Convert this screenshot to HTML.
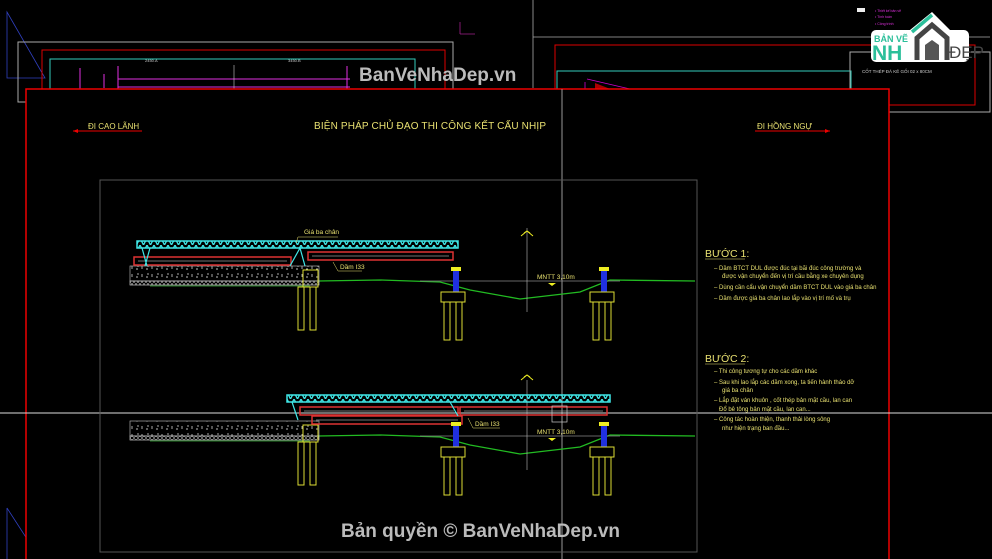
<!DOCTYPE html>
<html><head><meta charset="utf-8"><style>
html,body{margin:0;padding:0;background:#000;width:992px;height:559px;overflow:hidden}
svg{display:block}
text{font-family:"Liberation Sans Narrow","Liberation Sans",sans-serif}
</style></head><body>
<svg width="992" height="559" viewBox="0 0 992 559" xmlns="http://www.w3.org/2000/svg">
<defs>
<pattern id="truss" width="7" height="7" patternUnits="userSpaceOnUse">
<path d="M0 0 L3.5 7 L7 0" stroke="#40e8e8" stroke-width="1.3" fill="none"/>
</pattern>
<pattern id="hatch" width="10" height="8" patternUnits="userSpaceOnUse">
<path d="M2 2 v3 M6 5 h2 M8 1 v2" stroke="#bbb" stroke-width="0.9"/>
</pattern>
<pattern id="xh" width="4" height="4" patternUnits="userSpaceOnUse">
<path d="M0 0 L4 4 M4 0 L0 4" stroke="#ccc" stroke-width="0.5"/>
</pattern>
</defs>
<rect width="992" height="559" fill="#000"/>

<path d="M7 12 L7 78 L45 78 Z" stroke="#3040c0" stroke-width="0.8" fill="none"/>
<path d="M7 508 L7 559 M7 508 L40 559" stroke="#3040c0" stroke-width="0.8" fill="none"/>
<rect x="18" y="42" width="435" height="60" stroke="#aaa" fill="none"/>
<rect x="42" y="50" width="403" height="60" stroke="#d00" fill="none"/>
<rect x="50" y="59" width="365" height="60" stroke="#3cb" fill="none"/>
<path d="M118 66 V90 M347 66 V90 M118 79 H350 M118 87 H350" stroke="#e030e0" stroke-width="1"/>
<path d="M234 65 V90" stroke="#ccc" stroke-width="0.6"/>
<path d="M80 68 V90 M104 74 V88" stroke="#e030e0" stroke-width="1"/>
<text x="145" y="62" fill="#ccc" font-size="4">2450.A</text>
<text x="288" y="62" fill="#ccc" font-size="4">3450.B</text>
<path d="M460 22 V34 M460 34 H475" stroke="#a0208a" stroke-width="0.8"/>

<path d="M533 0 V88" stroke="#888" stroke-width="1"/>
<path d="M533 37 H990" stroke="#aaa" stroke-width="0.8"/>
<rect x="555" y="45" width="420" height="60" stroke="#d00" fill="none"/>
<rect x="557" y="71" width="294" height="40" stroke="#3cb" fill="none"/>
<rect x="850" y="52" width="140" height="60" stroke="#aaa" fill="none"/>
<path d="M587 79 L630 89 M585 82 L585 92 L610 92" stroke="#c0c" stroke-width="0.8" fill="none"/>
<path d="M595 83 L618 92 L595 92Z" fill="#a00"/>
<text x="862" y="73" fill="#ccc" font-size="4.5">CỐT THÉP ĐÁ KÊ GỐI 02 x 80CM</text>
<text x="875" y="12" fill="#e030e0" font-size="3.5">• Thiết kế bản vẽ</text>
<text x="875" y="18" fill="#e030e0" font-size="3.5">• Tính toán</text>
<text x="875" y="25" fill="#e030e0" font-size="3.5">• Công trình</text>
<rect x="857" y="8" width="8" height="4" fill="#eee"/>

<!-- logo -->
<g>
<rect x="871" y="30" width="98" height="32" rx="5" fill="#fff"/>
<path d="M910 30 L932 12 L956 36 L956 62 L912 62 Z" fill="#fff"/>
<path d="M917 60 V38 L932 25 L947 38 V60" stroke="#444" stroke-width="5" fill="none"/>
<path d="M925 60 V45 L932 40 L939 45 V60 Z" fill="#555"/>
<path d="M912 32 L932 15" stroke="#2bbf9a" stroke-width="3.5"/>
<text x="874" y="42" fill="#2bbf9a" font-size="9" font-weight="bold" font-family="Liberation Sans">BẢN VẼ</text>
<text x="872" y="60" fill="#2bbf9a" font-size="21" font-weight="bold" font-family="Liberation Sans">NH</text>
<text x="949" y="58" fill="#444" font-size="17" font-family="Liberation Sans">ĐẸP</text>
</g>

<text x="359" y="81" fill="#bbb" font-size="19" font-weight="bold" font-family="Liberation Sans">BanVeNhaDep.vn</text>

<rect x="26" y="89" width="863" height="480" stroke="#e00" stroke-width="1.5" fill="#000"/>
<path d="M562 89 V559" stroke="#999" stroke-width="1"/>
<path d="M0 413 H992" stroke="#ddd" stroke-width="1"/>
<rect x="100" y="180" width="597" height="372" stroke="#555" stroke-width="1" fill="none"/>

<text x="88" y="129" fill="#e8e070" font-size="8">ĐI CAO LÃNH</text>
<path d="M73 131 H142" stroke="#e00" stroke-width="1"/><path d="M73 131 l5 -2 v4z" fill="#e00"/>
<text x="314" y="129" fill="#e8e070" font-size="10" textLength="232">BIỆN PHÁP CHỦ ĐẠO THI CÔNG KẾT CẤU NHỊP</text>
<text x="757" y="129" fill="#e8e070" font-size="8">ĐI HỒNG NGỰ</text>
<path d="M755 131 H830" stroke="#e00" stroke-width="1"/><path d="M830 131 l-5 -2 v4z" fill="#e00"/>

<!-- BRIDGE 1 -->
<g>
<path d="M318 281 L380 280 L440 282 L470 290 L520 299 L580 292 L610 280 L695 281" stroke="#2b2" stroke-width="1.3" fill="none"/>
<path d="M420 281 H620" stroke="#888" stroke-width="0.7"/>
<path d="M527 228 V312" stroke="#bbb" stroke-width="0.6"/>
<path d="M521 236 l6 -5 l6 5 M524 233 l3 -2 l3 2" stroke="#ee2" stroke-width="1" fill="none"/>
<text x="537" y="279" fill="#e8e070" font-size="6.5">MNTT 3,10m</text>
<path d="M548 283 h8 l-4 3z" fill="#ee2"/>
<rect x="130" y="266" width="189" height="15" fill="url(#hatch)" stroke="#aaa" stroke-width="0.7"/>
<rect x="130" y="281" width="189" height="4" fill="url(#xh)" stroke="#ccc" stroke-width="0.7"/>
<path d="M150 286 H310" stroke="#3a3" stroke-width="0.8"/>
<rect x="303" y="270" width="15" height="17" stroke="#dd3" fill="none"/>
<rect x="298" y="287" width="6" height="43" stroke="#dd3" fill="none"/>
<rect x="310" y="287" width="6" height="43" stroke="#dd3" fill="none"/>
<rect x="134" y="257" width="157" height="8" stroke="#d33" fill="none" stroke-width="1.5"/>
<path d="M138 261 H287" stroke="#999" stroke-width="0.7"/>
<rect x="308" y="252" width="145" height="8" stroke="#d33" fill="none" stroke-width="1.5"/>
<path d="M312 256 H449" stroke="#999" stroke-width="0.7"/>
<rect x="137" y="241" width="321" height="7" fill="url(#truss)" stroke="#40e8e8" stroke-width="1.5"/>
<path d="M142 248 L147 266 M150 248 L145 266 M300 248 L290 266 M300 248 L305 266" stroke="#40e8e8" stroke-width="1.2"/>
<text x="304" y="234" fill="#e8e070" font-size="6.5">Giá ba chân</text>
<path d="M298 237 H338 M298 237 L296 243" stroke="#e8e070" stroke-width="0.5"/>
<text x="340" y="269" fill="#e8e070" font-size="6.5">Dầm I33</text>
<path d="M338 271 H362 M338 271 L333 262" stroke="#e8e070" stroke-width="0.5"/>
<rect x="453" y="270" width="6" height="22" fill="#2030e0"/>
<rect x="451" y="267" width="10" height="4" fill="#ee2"/>
<rect x="441" y="292" width="24" height="10" stroke="#dd3" fill="none"/>
<rect x="444" y="302" width="6" height="38" stroke="#dd3" fill="none"/>
<rect x="456" y="302" width="6" height="38" stroke="#dd3" fill="none"/>
<rect x="601" y="270" width="6" height="22" fill="#2030e0"/>
<rect x="599" y="267" width="10" height="4" fill="#ee2"/>
<rect x="590" y="292" width="24" height="10" stroke="#dd3" fill="none"/>
<rect x="593" y="302" width="6" height="38" stroke="#dd3" fill="none"/>
<rect x="605" y="302" width="6" height="38" stroke="#dd3" fill="none"/>
</g>

<!-- BRIDGE 2 -->
<g>
<path d="M318 436 L380 435 L440 437 L470 445 L520 454 L580 447 L610 435 L695 436" stroke="#2b2" stroke-width="1.3" fill="none"/>
<path d="M420 436 H620" stroke="#888" stroke-width="0.7"/>
<path d="M527 380 V470" stroke="#bbb" stroke-width="0.6"/>
<path d="M521 380 l6 -5 l6 5 M524 377 l3 -2 l3 2" stroke="#ee2" stroke-width="1" fill="none"/>
<text x="537" y="434" fill="#e8e070" font-size="6.5">MNTT 3,10m</text>
<path d="M548 438 h8 l-4 3z" fill="#ee2"/>
<rect x="130" y="421" width="189" height="15" fill="url(#hatch)" stroke="#aaa" stroke-width="0.7"/>
<rect x="130" y="436" width="189" height="4" fill="url(#xh)" stroke="#ccc" stroke-width="0.7"/>
<path d="M150 441 H310" stroke="#3a3" stroke-width="0.8"/>
<rect x="303" y="425" width="15" height="17" stroke="#dd3" fill="none"/>
<rect x="298" y="442" width="6" height="43" stroke="#dd3" fill="none"/>
<rect x="310" y="442" width="6" height="43" stroke="#dd3" fill="none"/>
<rect x="300" y="407" width="158" height="8" stroke="#d33" fill="none" stroke-width="1.5"/>
<path d="M304 411 H454" stroke="#999" stroke-width="0.7"/>
<rect x="312" y="416" width="150" height="8" stroke="#d33" fill="none" stroke-width="1.5"/>
<path d="M316 420 H458" stroke="#999" stroke-width="0.7"/>
<rect x="460" y="407" width="147" height="8" stroke="#d33" fill="none" stroke-width="1.5"/>
<path d="M464 411 H603" stroke="#999" stroke-width="0.7"/>
<rect x="552" y="406" width="15" height="16" stroke="#ccc" fill="none" stroke-width="0.7"/>
<rect x="287" y="395" width="323" height="7" fill="url(#truss)" stroke="#40e8e8" stroke-width="1.5"/>
<path d="M292 402 L298 420 M450 402 L458 416" stroke="#40e8e8" stroke-width="1.2"/>
<text x="475" y="426" fill="#e8e070" font-size="6.5">Dầm I33</text>
<path d="M473 428 H500 M473 428 L468 418" stroke="#e8e070" stroke-width="0.5"/>
<rect x="453" y="425" width="6" height="22" fill="#2030e0"/>
<rect x="451" y="422" width="10" height="4" fill="#ee2"/>
<rect x="441" y="447" width="24" height="10" stroke="#dd3" fill="none"/>
<rect x="444" y="457" width="6" height="38" stroke="#dd3" fill="none"/>
<rect x="456" y="457" width="6" height="38" stroke="#dd3" fill="none"/>
<rect x="601" y="425" width="6" height="22" fill="#2030e0"/>
<rect x="599" y="422" width="10" height="4" fill="#ee2"/>
<rect x="590" y="447" width="24" height="10" stroke="#dd3" fill="none"/>
<rect x="593" y="457" width="6" height="38" stroke="#dd3" fill="none"/>
<rect x="605" y="457" width="6" height="38" stroke="#dd3" fill="none"/>
</g>

<g fill="#e8e070" font-size="6">
<text x="705" y="257" font-size="10.5">BƯỚC 1:</text>
<path d="M705 259 H745" stroke="#e8e070" stroke-width="0.5"/>
<text x="714" y="270">– Dầm BTCT DUL được đúc tại bãi đúc công trường và</text>
<text x="722" y="278">được vận chuyển đến vị trí cầu bằng xe chuyên dụng</text>
<text x="714" y="289">– Dùng cần cẩu vận chuyển dầm BTCT DUL vào giá ba chân</text>
<text x="714" y="300">– Dầm được giá ba chân lao lắp vào vị trí  mố và trụ</text>
<text x="705" y="362" font-size="10.5">BƯỚC 2:</text>
<path d="M705 364 H745" stroke="#e8e070" stroke-width="0.5"/>
<text x="714" y="373">– Thi công tương tự cho các dầm khác</text>
<text x="714" y="384">– Sau khi lao lắp các dầm xong, ta tiến hành tháo dỡ</text>
<text x="722" y="392">giá ba chân</text>
<text x="714" y="402">– Lắp đặt ván khuôn , cốt thép bản mặt cầu, lan can</text>
<text x="719" y="411">Đổ bê tông bản mặt cầu, lan can...</text>
<text x="714" y="421">– Công tác hoàn thiện, thanh thải lòng sông</text>
<text x="722" y="430">như hiện trạng ban đầu...</text>
</g>

<text x="341" y="537" fill="#bbb" font-size="19" font-weight="bold" font-family="Liberation Sans">Bản quyền © BanVeNhaDep.vn</text>
</svg>
</body></html>
